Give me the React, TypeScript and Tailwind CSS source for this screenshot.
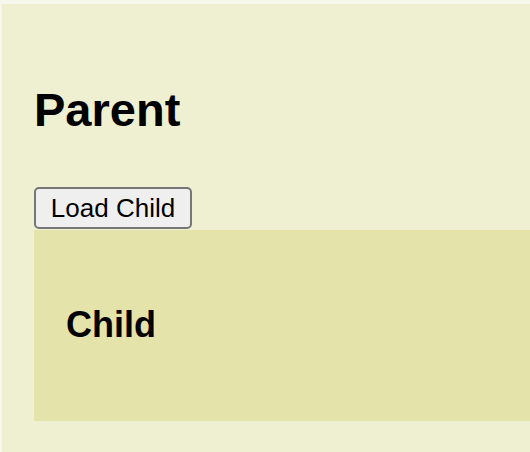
export default function App() {
  return (
    <div className="w-[530px] h-[452px] overflow-hidden bg-[#f7f7ec] pt-[4px] pl-[2px] font-['Liberation_Sans',Arial,sans-serif] text-black">
      <div className="bg-[#eff0d2] pl-[32px] pt-[82px] pb-[31px]">
        <h1 className="text-[47px] font-bold leading-none">Parent</h1>
        <button className="mt-[54px] mb-[1px] w-[158px] h-[42px] bg-[#efefef] border-2 border-[#767676] rounded-[5px] text-[26px] leading-none">
          Load Child
        </button>
        <div className="bg-[#e3e3aa] h-[191px] pl-[32px] pt-[77px]">
          <h2 className="text-[36px] font-bold leading-none">Child</h2>
        </div>
      </div>
    </div>
  )
}
